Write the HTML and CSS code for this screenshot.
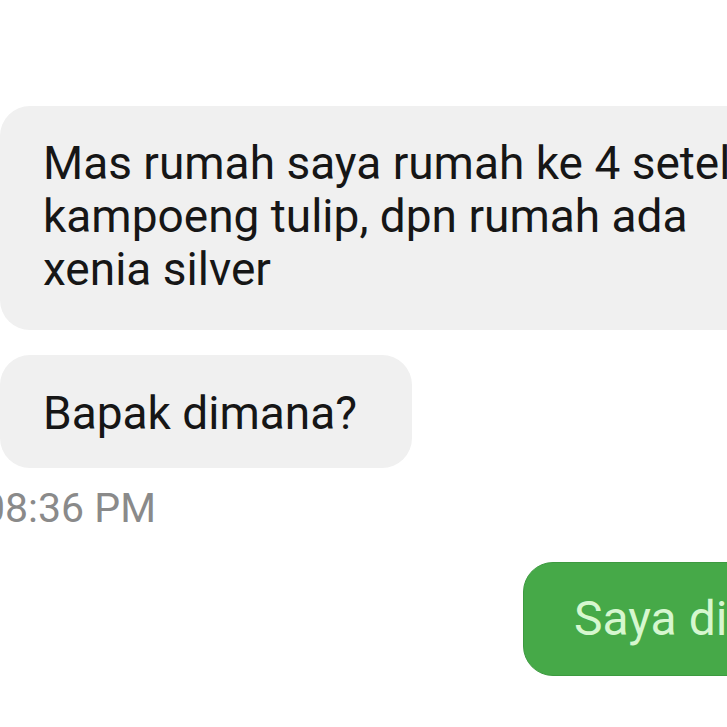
FILE: index.html
```html
<!DOCTYPE html>
<html lang="id">
<head>
    <meta charset="UTF-8">
    <meta name="viewport" content="width=device-width, initial-scale=1.0">
    <title>Chat</title>
    <link rel="stylesheet" href="styles.css">
</head>
<body>
    <div class="chat">
        <div class="top-fade"></div>

        <!-- pesan masuk -->
        <div class="bubble in big">
            Mas rumah saya rumah ke 4 setelah<br>
            kampoeng tulip, dpn rumah ada<br>
            xenia silver
        </div>
        <div class="bubble in small">
            Bapak dimana?
        </div>
        <div class="time">08:36 PM</div>

        <!-- pesan keluar -->
        <div class="row-out">
            <div class="bubble out">Saya dimana pak</div>
        </div>
    </div>
</body>
</html>
```
FILE: styles.css
```css
body {
    margin: 0;
    background-color: #ffffff;
    overflow: hidden;
    font-family: Roboto, "Noto Sans", sans-serif;
}
.chat {
    display: flex;
    flex-direction: column;
    align-items: flex-start;
    width: 727px;
    height: 727px;
    overflow: hidden;
}
.top-fade {
    height: 106px;
    width: 100%;
}
.bubble {
    font-size: 46px;
    line-height: 53px;
    white-space: nowrap;
    border-radius: 30px;
}
.in {
    background-color: #f0f0f0;
    color: #161616;
}
.big {
    padding: 31px 60px 34px 43px;
}
.small {
    margin-top: 25px;
    padding: 32px 55px 28px 43px;
}
.time {
    margin: 16px 0 0 -18px;
    font-size: 41px;
    line-height: 48px;
    color: #8a8a8a;
}
.row-out {
    display: flex;
    width: 100%;
    padding-left: 523px;
    margin-top: 30px;
    box-sizing: border-box;
}
.out {
    background-color: #46a948;
    color: #d6f7cf;
    border: 1px solid #3d9a40;
    padding: 28px 40px 28px 50px;
    font-size: 48px;
    line-height: 56px;
}
```
